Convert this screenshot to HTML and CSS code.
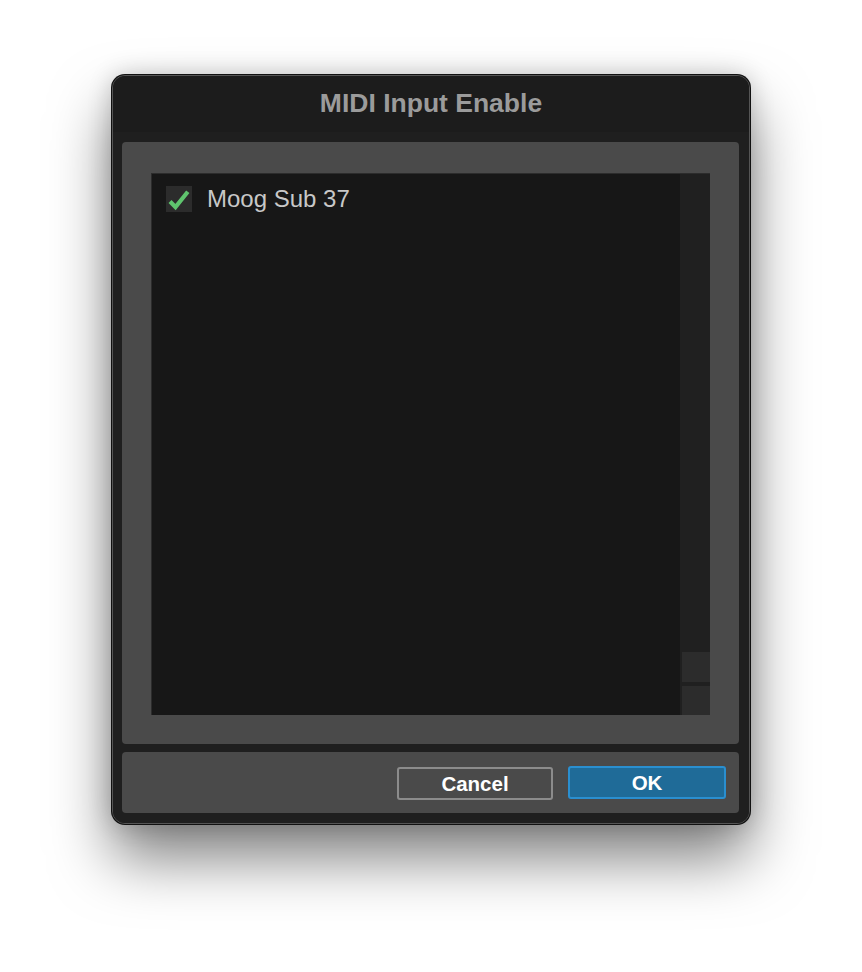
FILE: index.html
```html
<!DOCTYPE html>
<html>
<head>
<meta charset="utf-8">
<link rel="stylesheet" href="styles.css">
</head>
<body>
<div class="stage">
  <div class="window">
    <div class="titlebar">MIDI Input Enable</div>
    <div class="body">
      <div class="panel">
        <div class="listbox">
          <div class="list">
            <div class="item">
              <span class="checkbox">
                <svg width="26" height="26" viewBox="0 0 26 26"><path d="M4 15.5 L9.5 21 L21.8 5.8" fill="none" stroke="#5fc46e" stroke-width="4.2" stroke-linecap="butt" stroke-linejoin="miter"/></svg>
              </span>
              <span class="label">Moog Sub 37</span>
            </div>
          </div>
          <div class="scrollbar">
            <div class="sb-btn"></div>
            <div class="sb-btn"></div>
          </div>
        </div>
      </div>
      <div class="footer">
        <button class="btn cancel">Cancel</button>
        <button class="btn ok">OK</button>
      </div>
    </div>
  </div>
</div>
</body>
</html>
```
FILE: styles.css
```css
html, body {
  margin: 0;
  padding: 0;
  background: #ffffff;
}
.stage {
  width: 862px;
  height: 972px;
  padding: 75px 0 0 112px;
  box-sizing: border-box;
}
.window {
  width: 638px;
  height: 749px;
  box-sizing: border-box;
  background: #1e1e1e;
  border: 1px solid #555555;
  border-radius: 13px;
  box-shadow: 0 0 0 1px #111111, 0 34px 60px rgba(0,0,0,0.5), 0 0 24px rgba(0,0,0,0.2);
  display: flex;
  flex-direction: column;
  overflow: hidden;
  font-family: "Liberation Sans", Arial, sans-serif;
}
.titlebar {
  height: 56px;
  flex: none;
  background: #1c1c1c;
  color: #9b9b9b;
  font-weight: bold;
  font-size: 26.5px;
  display: flex;
  align-items: center;
  justify-content: center;
  padding-bottom: 1px;
  box-sizing: border-box;
}
.body {
  flex: 1;
  background: #1f1f1f;
  padding: 10px 10px 10px 9px;
  display: flex;
  flex-direction: column;
  gap: 8px;
}
.panel {
  height: 602px;
  box-sizing: border-box;
  background: #4a4a4a;
  border-radius: 4px;
  padding: 31px 29px 29px 29px;
  display: flex;
}
.listbox {
  flex: 1;
  display: flex;
  background: #171717;
  border-top: 1px solid #2c2c2c;
  border-left: 1px solid #2c2c2c;
}
.list {
  flex: 1;
  padding: 12px 0 0 14px;
}
.item {
  display: flex;
  align-items: center;
  gap: 15px;
}
.checkbox {
  width: 26px;
  height: 26px;
  background: #2c2c2c;
  display: block;
}
.checkbox svg {
  display: block;
}
.label {
  color: #c8c8c8;
  font-size: 24px;
  line-height: 26px;
}
.scrollbar {
  width: 30px;
  background: #202020;
  display: flex;
  flex-direction: column;
  justify-content: flex-end;
  align-items: flex-end;
  gap: 4px;
}
.sb-btn {
  width: 28px;
  height: 30px;
  background: #2c2c2c;
}
.sb-btn + .sb-btn {
  height: 29px;
}
.footer {
  flex: 1;
  background: #4a4a4a;
  border-radius: 4px;
  display: flex;
  justify-content: flex-end;
  align-items: center;
  gap: 15px;
  padding: 0 13px 0 0;
}
.btn {
  font-family: "Liberation Sans", Arial, sans-serif;
  font-weight: bold;
  font-size: 20.5px;
  color: #ffffff;
  height: 33px;
  border-radius: 3px;
  box-sizing: border-box;
  padding: 0;
  margin: 0;
  display: flex;
  align-items: center;
  justify-content: center;
  padding-top: 1px;
}
.cancel {
  width: 156px;
  background: #4a4a4a;
  border: 2px solid #8c8c8c;
  margin-top: 2px;
}
.ok {
  width: 158px;
  background: #1f6b98;
  border: 2px solid #2a8fd0;
}
```
